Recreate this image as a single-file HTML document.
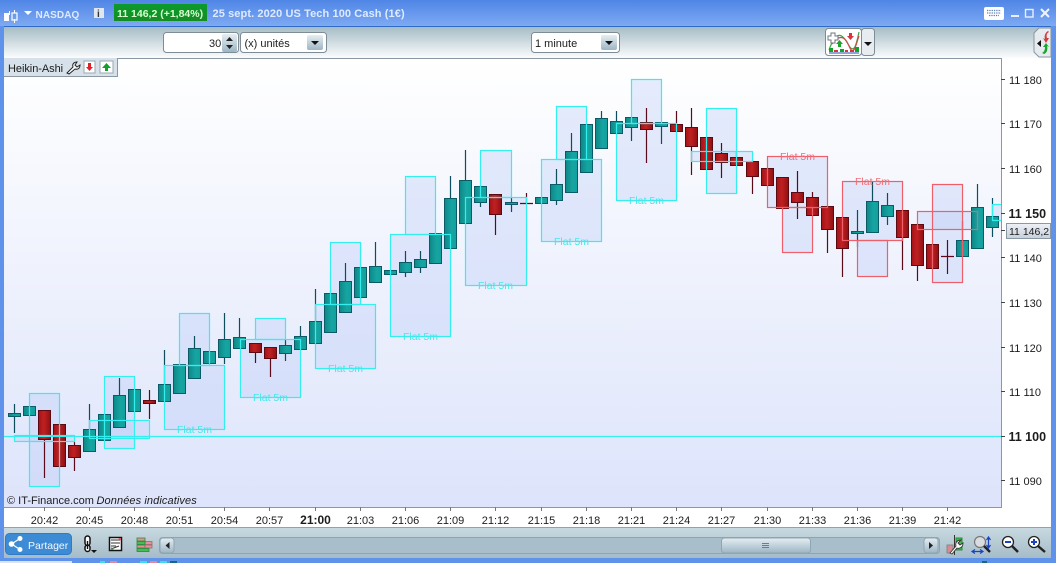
<!DOCTYPE html>
<html><head><meta charset="utf-8"><style>
html,body{margin:0;padding:0;width:1056px;height:563px;overflow:hidden;background:#5f92ea}
svg{display:block;position:absolute;left:0;top:0}
text{font-family:"Liberation Sans",sans-serif;font-size:11px;fill:#1c1c1c}
</style></head><body>
<svg width="1056" height="563" viewBox="0 0 1056 563" xmlns="http://www.w3.org/2000/svg">
<defs>
<linearGradient id="title" x1="0" y1="0" x2="0" y2="1"><stop offset="0" stop-color="#4f85e6"/><stop offset="1" stop-color="#7eaaf2"/></linearGradient>
<linearGradient id="tb" x1="0" y1="0" x2="0" y2="1"><stop offset="0" stop-color="#a3bac3"/><stop offset=".55" stop-color="#d3dfe3"/><stop offset="1" stop-color="#fbfcfd"/></linearGradient>
<linearGradient id="chart" x1="0" y1="0" x2="0" y2="1"><stop offset="0" stop-color="#ffffff"/><stop offset="1" stop-color="#dde4fb"/></linearGradient>
<linearGradient id="bb" x1="0" y1="0" x2="0" y2="1"><stop offset="0" stop-color="#c9dae1"/><stop offset="1" stop-color="#a5bcc8"/></linearGradient>
<linearGradient id="t" x1="0" y1="0" x2="1" y2="0"><stop offset="0" stop-color="#0d8787"/><stop offset=".6" stop-color="#16a5a2"/><stop offset="1" stop-color="#12a09d"/></linearGradient>
<linearGradient id="r" x1="0" y1="0" x2="1" y2="0"><stop offset="0" stop-color="#a31418"/><stop offset=".45" stop-color="#c02022"/><stop offset="1" stop-color="#8f1013"/></linearGradient>
<linearGradient id="btn" x1="0" y1="0" x2="0" y2="1"><stop offset="0" stop-color="#e6eef2"/><stop offset="1" stop-color="#9db6c4"/></linearGradient>
<linearGradient id="grn" x1="0" y1="0" x2="0" y2="1"><stop offset="0" stop-color="#0c9a2c"/><stop offset="1" stop-color="#148d25"/></linearGradient>
<linearGradient id="price" x1="0" y1="0" x2="0" y2="1"><stop offset="0" stop-color="#eef1f7"/><stop offset="1" stop-color="#c6cfdb"/></linearGradient>
</defs>

<!-- window -->
<rect width="1056" height="563" fill="#5f92ea"/>
<rect width="1056" height="26" fill="url(#title)"/>
<rect x="0" y="561" width="72" height="2" fill="#dbe4ec"/>
<rect x="100" y="561" width="5" height="2" fill="#39dfe6"/><rect x="110" y="561" width="7" height="2" fill="#e08a9c"/><rect x="140" y="561" width="7" height="2" fill="#39dfe6"/><rect x="150" y="561" width="7" height="2" fill="#e08a9c"/><rect x="160" y="561" width="7" height="2" fill="#39dfe6"/><rect x="170" y="561" width="7" height="2" fill="#116b78"/><rect x="982" y="561" width="5" height="2" fill="#116b78"/>
<!-- toolbar -->
<rect x="4" y="26" width="1047" height="32" fill="url(#tb)"/>
<rect x="4" y="26" width="1047" height="1" fill="#2f6bc9"/>
<!-- chart bg -->
<rect x="4" y="58" width="1047" height="449" fill="#fff"/>
<rect x="4" y="58" width="997" height="449" fill="url(#chart)"/>
<rect x="1001" y="58" width="50" height="469" fill="#fff"/>
<rect x="4" y="507" width="1047" height="20" fill="#fff"/>
<path d="M4 58.5H1001.5V507.5H4" fill="none" stroke="#8b97a3"/>
<rect x="4" y="527" width="1047" height="31" fill="url(#bb)"/>
<rect x="4" y="527" width="1047" height="1" fill="#8fa3ae"/>

<!-- title bar content -->
<path d="M9.5 11v4M14.5 10v3M14.5 19v4" stroke="#fff" fill="none"/>
<rect x="4" y="13" width="5" height="8" fill="#fff"/>
<rect x="12" y="13" width="5" height="7" fill="none" stroke="#fff" stroke-width="1.2"/>
<path d="M24 11h8l-4 4z" fill="#fff"/>
<text x="35.5" y="18" style="font-weight:bold;font-size:10px;fill:#dfeaff;letter-spacing:.1px">NASDAQ</text>
<rect x="94" y="8" width="10" height="10" fill="#dfe7f3"/>
<text x="97" y="17" style="font-weight:bold;font-size:10px;fill:#333">i</text>
<rect x="114" y="4" width="93" height="17" fill="url(#grn)"/>
<text x="117" y="17" style="font-weight:bold;font-size:10.5px;fill:#d7ffd0">11 146,2 (+1,84%)</text>
<text x="212.5" y="17" style="font-weight:bold;font-size:11px;fill:#dfeaff;letter-spacing:.1px">25 sept. 2020 US Tech 100 Cash (1€)</text>
<!-- keyboard -->
<rect x="984" y="7" width="20" height="13" rx="2" fill="#fff"/>
<path d="M987 10.5h14M987 13h14M989 15.5h10" stroke="#5f7fb5" stroke-width="1.3" stroke-dasharray="1.3 1" fill="none"/>
<rect x="1011" y="15" width="8" height="2" fill="#e8effb"/>
<rect x="1025.5" y="9.5" width="7.5" height="7.5" fill="none" stroke="#e8effb" stroke-width="1.4"/>
<path d="M1041 9l8 8M1049 9l-8 8" stroke="#f0f5fd" stroke-width="2"/>

<!-- toolbar controls -->
<rect x="163.5" y="32.5" width="75" height="20" rx="3" fill="#fff" stroke="#7e8c96"/>
<text x="209" y="47">30</text>
<rect x="222" y="34" width="15" height="18" rx="2" fill="url(#btn)"/>
<path d="M226 41l3.5-4 3.500 4zM226 45l3.500 4 3.500-4z" fill="#222"/>
<rect x="240.500" y="32.500" width="86" height="20" rx="3" fill="#fff" stroke="#7e8c96"/>
<text x="244.500" y="47">(x) unités</text>
<rect x="307" y="35" width="16" height="15" rx="2" fill="url(#btn)"/>
<path d="M311 41h8l-4 4z" fill="#111"/>
<rect x="531.500" y="32.500" width="88" height="20" rx="3" fill="#fff" stroke="#7e8c96"/>
<text x="535" y="47">1 minute</text>
<rect x="601" y="35" width="16" height="15" rx="2" fill="url(#btn)"/>
<path d="M605 41h8l-4 4z" fill="#111"/>
<!-- indicator button -->
<rect x="825.500" y="28.500" width="36" height="27" rx="3" fill="#fff" stroke="#7e8c96"/>
<rect x="861.500" y="28.500" width="13" height="27" rx="3" fill="#e6ecef" stroke="#7e8c96"/>
<path d="M864 42h8l-4 4z" fill="#111"/>
<path d="M829 50C836 30 842 33 848 44S856 46 859 32" fill="none" stroke="#3aa845" stroke-width="1.2"/>
<path d="M832 44C838 36 844 34 849 46S856 44 859 36" fill="none" stroke="#d14a4a" stroke-width="1.2"/>
<path d="M831 33h4v3h3v4h-3v3h-4v-3h-3v-4h3z" fill="#fff" stroke="#6f7a82"/>
<path d="M838 47v-3h-2l3.500-4 3.500 4h-2v3z" fill="#1ba52e"/>
<path d="M849 33h3v3h2l-3.500 4-3.500-4h2z" fill="#d8343f"/>
<path d="M829 48h4v4h-4zM840 49h4v3h-4zM855 47h4v5h-4z" fill="#10a527"/>
<path d="M834 50h4v2h-4zM845 50h3v2h-3zM850 50h4v2h-4z" fill="#d8343f"/>
<path d="M829 53h30" stroke="#2248b0"/>
<!-- side tab -->
<path d="M1051 28h-12l-5 5v19l5 5h12z" fill="#e6ebef" stroke="#8a97a2"/>
<path d="M1041 40l-4 3.500 4 3.500z" fill="#111"/>
<path d="M1048 31c-3 2-4 5-3 8l-2-1 3 5 3-5h-2c-1-3 0-5 2-6z" fill="#d63b3b"/>
<path d="M1044 54c3-1 4-5 3-8l2 1-3-4-3 4h2c0 3-1 5-3 6z" fill="#1aa52c"/>

<!-- box fills -->
<g fill="#bccdf8" fill-opacity=".38">
<rect x="29.500" y="393.500" width="30" height="93"/><rect x="14.500" y="435.500" width="60" height="6"/>
<rect x="104.500" y="376.500" width="30" height="72"/><rect x="89.500" y="420.500" width="60" height="18"/>
<rect x="179.500" y="313.500" width="30" height="52"/><rect x="164.500" y="365.500" width="60" height="64"/>
<rect x="255.500" y="318.500" width="30" height="21"/><rect x="240.500" y="339.500" width="60" height="58"/>
<rect x="330.500" y="242.500" width="30" height="62"/><rect x="315.500" y="304.500" width="60" height="64"/>
<rect x="405.500" y="176.500" width="30" height="58"/><rect x="390.500" y="234.500" width="60" height="102"/>
<rect x="480.500" y="150.500" width="31" height="47"/><rect x="465.500" y="197.500" width="61" height="88"/>
<rect x="556.500" y="106.500" width="30" height="53"/><rect x="541.500" y="159.500" width="60" height="82"/>
<rect x="631.500" y="79.500" width="30" height="44"/><rect x="616.500" y="123.500" width="60" height="77"/>
<rect x="706.500" y="108.500" width="30" height="85"/><rect x="691.500" y="151.500" width="61" height="10"/>
<rect x="767.500" y="156.500" width="60" height="51"/><rect x="782.500" y="207.500" width="30" height="45"/>
<rect x="842.500" y="181.500" width="60" height="59"/><rect x="857.500" y="240.500" width="30" height="36"/>
<rect x="932.500" y="184.500" width="30" height="98"/><rect x="917.500" y="211.500" width="60" height="18"/>
<rect x="992.500" y="204.500" width="9" height="16"/>
</g>

<!-- wicks -->
<path fill="none" stroke="#0e4d5c" stroke-width="1.2" d="M14.500 404V433M89.500 404V430M119.500 378V396M164.500 350V385M194.500 336V349M224.500 313V364M239.500 318V338M285.500 340V361M300.500 326V337M315.500 289V322M345.500 263V282M375.500 242V267M405.500 251V277M420.500 251V273M450.500 176V199M465.500 150V181M480.500 190V207M511.500 198V212M556.500 169V205M571.500 133V152M601.500 111V119M616.500 111V122M631.500 127V141M661.500 126V144M857.500 210V247M872.500 182V202M887.500 193V225M962.500 221V241M977.500 184V208M992.500 198V237"/>
<path fill="none" stroke="#5a0a1a" stroke-width="1.2" d="M44.500 439V478M74.500 442V471M149.500 390V419M255.500 352V363M270.500 358V377M495.500 214V235M526.500 193V204M520 203.500H533M646.500 108V163M676.500 111V125M691.500 108V175M721.500 143V178M736.500 152V158M752.500 176V194M797.500 171V219M812.500 192V198M827.500 229V253M842.500 248V277M902.500 237V270M917.500 265V281M947.500 240V274M941 256.500H954"/>

<!-- teal bodies -->
<g fill="url(#t)" stroke="#0b5a68">
<rect x="8.500" y="413.500" width="12" height="3"/><rect x="23.500" y="406.500" width="12" height="9"/><rect x="83.500" y="429.500" width="12" height="22"/><rect x="98.500" y="414.500" width="12" height="26"/><rect x="113.500" y="395.500" width="12" height="32"/><rect x="128.500" y="389.500" width="12" height="22"/><rect x="158.500" y="384.500" width="12" height="17"/><rect x="173.500" y="364.500" width="12" height="29"/><rect x="188.500" y="348.500" width="12" height="30"/><rect x="203.500" y="351.500" width="12" height="12"/><rect x="218.500" y="339.500" width="12" height="18"/><rect x="233.500" y="337.500" width="12" height="11"/><rect x="279.500" y="345.500" width="12" height="8"/><rect x="294.500" y="336.500" width="12" height="13"/><rect x="309.500" y="321.500" width="12" height="22"/><rect x="324.500" y="293.500" width="12" height="39"/><rect x="339.500" y="281.500" width="12" height="31"/><rect x="354.500" y="267.500" width="12" height="30"/><rect x="369.500" y="266.500" width="12" height="16"/><rect x="384.500" y="270.500" width="12" height="4"/><rect x="399.500" y="262.500" width="12" height="10"/><rect x="414.500" y="259.500" width="12" height="8"/><rect x="429.500" y="233.500" width="12" height="30"/><rect x="444.500" y="198.500" width="12" height="50"/><rect x="459.500" y="180.500" width="12" height="43"/><rect x="474.500" y="186.500" width="12" height="16"/><rect x="505.500" y="202.500" width="12" height="2"/><rect x="535.500" y="197.500" width="12" height="6"/><rect x="550.500" y="184.500" width="12" height="16"/><rect x="565.500" y="151.500" width="12" height="41"/><rect x="580.500" y="124.500" width="12" height="48"/><rect x="595.500" y="118.500" width="12" height="30"/><rect x="610.500" y="121.500" width="12" height="12"/><rect x="625.500" y="117.500" width="12" height="10"/><rect x="655.500" y="122.500" width="12" height="4"/><rect x="851.500" y="231.500" width="12" height="2"/><rect x="866.500" y="201.500" width="12" height="31"/><rect x="881.500" y="205.500" width="12" height="11"/><rect x="956.500" y="240.500" width="12" height="16"/><rect x="971.500" y="207.500" width="12" height="41"/><rect x="986.500" y="216.500" width="12" height="11"/>
</g>
<!-- red bodies -->
<g fill="url(#r)" stroke="#5c0a12">
<rect x="38.500" y="410.500" width="12" height="29"/><rect x="53.500" y="424.500" width="12" height="42"/><rect x="68.500" y="445.500" width="12" height="12"/><rect x="143.500" y="400.500" width="12" height="3"/><rect x="249.500" y="343.500" width="12" height="9"/><rect x="264.500" y="347.500" width="12" height="11"/><rect x="489.500" y="194.500" width="12" height="20"/><rect x="640.500" y="122.500" width="12" height="7"/><rect x="670.500" y="124.500" width="12" height="7"/><rect x="685.500" y="127.500" width="12" height="19"/><rect x="700.500" y="137.500" width="12" height="32"/><rect x="715.500" y="153.500" width="12" height="9"/><rect x="730.500" y="157.500" width="12" height="8"/><rect x="746.500" y="161.500" width="12" height="15"/><rect x="761.500" y="168.500" width="12" height="17"/><rect x="776.500" y="177.500" width="12" height="31"/><rect x="791.500" y="192.500" width="12" height="10"/><rect x="806.500" y="197.500" width="12" height="18"/><rect x="821.500" y="206.500" width="12" height="23"/><rect x="836.500" y="217.500" width="12" height="31"/><rect x="896.500" y="210.500" width="12" height="27"/><rect x="911.500" y="224.500" width="12" height="41"/><rect x="926.500" y="244.500" width="12" height="24"/>
</g>

<!-- box strokes -->
<g fill="none" stroke="#35eeee" stroke-width="1.2">
<rect x="29.500" y="393.500" width="30" height="93"/><rect x="14.500" y="435.500" width="60" height="6"/>
<rect x="104.500" y="376.500" width="30" height="72"/><rect x="89.500" y="420.500" width="60" height="18"/>
<rect x="179.500" y="313.500" width="30" height="52"/><rect x="164.500" y="365.500" width="60" height="64"/>
<rect x="255.500" y="318.500" width="30" height="21"/><rect x="240.500" y="339.500" width="60" height="58"/>
<rect x="330.500" y="242.500" width="30" height="62"/><rect x="315.500" y="304.500" width="60" height="64"/>
<rect x="405.500" y="176.500" width="30" height="58"/><rect x="390.500" y="234.500" width="60" height="102"/>
<rect x="480.500" y="150.500" width="31" height="47"/><rect x="465.500" y="197.500" width="61" height="88"/>
<rect x="556.500" y="106.500" width="30" height="53"/><rect x="541.500" y="159.500" width="60" height="82"/>
<rect x="631.500" y="79.500" width="30" height="44"/><rect x="616.500" y="123.500" width="60" height="77"/>
<rect x="706.500" y="108.500" width="30" height="85"/><rect x="691.500" y="151.500" width="61" height="10"/>
<path d="M1001 204.500H992.500V220.500H1001"/>
<path d="M4 436.500H1001"/>
</g>
<g fill="none" stroke="#ef5f6a" stroke-width="1.2">
<rect x="767.500" y="156.500" width="60" height="51"/><rect x="782.500" y="207.500" width="30" height="45"/>
<rect x="842.500" y="181.500" width="60" height="59"/><rect x="857.500" y="240.500" width="30" height="36"/>
<rect x="932.500" y="184.500" width="30" height="98"/><rect x="917.500" y="211.500" width="60" height="18"/>
</g>

<!-- box labels -->
<g text-anchor="middle">
<text x="194.500" y="433" style="fill:#45e8ea;font-size:10.5px">Flat 5m</text>
<text x="270.500" y="401" style="fill:#45e8ea;font-size:10.5px">Flat 5m</text>
<text x="345.500" y="372" style="fill:#45e8ea;font-size:10.5px">Flat 5m</text>
<text x="420.500" y="340" style="fill:#45e8ea;font-size:10.5px">Flat 5m</text>
<text x="495.500" y="289" style="fill:#45e8ea;font-size:10.5px">Flat 5m</text>
<text x="571.500" y="245" style="fill:#45e8ea;font-size:10.5px">Flat 5m</text>
<text x="646.500" y="204" style="fill:#45e8ea;font-size:10.5px">Flat 5m</text>
<text x="797.500" y="160" style="fill:#ef6f78;font-size:10.5px">Flat 5m</text>
<text x="872.500" y="185" style="fill:#ef6f78;font-size:10.5px">Flat 5m</text>
</g>

<!-- heikin tab -->
<rect x="4" y="58" width="113" height="18" fill="#d6e1ea"/>
<path d="M4 76.500H117.500V58" fill="none" stroke="#8b97a3"/>
<text x="8" y="72" style="font-size:11px;letter-spacing:-.05px">Heikin-Ashi</text>
<path d="M67 73l6-6c-1-3 1-5 4-5l-2 3 2 2 3-2c0 3-2 5-5 4l-6 5z" fill="#fff" stroke="#222"/>
<rect x="84" y="61" width="11" height="12" fill="#fff" stroke="#9ba8b2"/>
<path d="M89.500 71l-3.500-4h7z" fill="#e0202a"/><rect x="88" y="63" width="3" height="4" fill="#e0202a"/>
<rect x="100" y="61" width="13" height="12" fill="#fff" stroke="#9ba8b2"/>
<path d="M106.500 63l-4.500 5h3v3h3v-3h3z" fill="#13a12b"/>

<!-- copyright -->
<text x="7" y="504">© IT-Finance.com</text>
<text x="96.500" y="504" style="font-style:italic;letter-spacing:.1px">Données indicatives</text>

<!-- y axis -->
<path d="M1001 79.500h4M1001 123.500h4M1001 168.500h4M1001 213.500h4M1001 230.500h4M1001 257.500h4M1001 302.500h4M1001 347.500h4M1001 391.500h4M1001 436.500h4M1001 480.500h4" stroke="#444"/>
<text x="1009" y="84">11 180</text>
<text x="1009" y="128">11 170</text>
<text x="1009" y="173">11 160</text>
<text x="1008.500" y="218" style="font-weight:bold;font-size:12.500px">11 150</text>
<text x="1009" y="262">11 140</text>
<text x="1009" y="307">11 130</text>
<text x="1009" y="352">11 120</text>
<text x="1009" y="396">11 110</text>
<text x="1008.500" y="441" style="font-weight:bold;font-size:12.500px">11 100</text>
<text x="1009" y="485">11 090</text>
<rect x="1006.500" y="223.500" width="44" height="15" fill="url(#price)" stroke="#8a98a6"/>
<text x="1009" y="235" style="font-size:10.5px">11 146,2</text>

<!-- x axis -->
<path d="M44.500 507v4M89.500 507v4M134.500 507v4M179.500 507v4M224.500 507v4M269.500 507v4M315.500 507v4M360.500 507v4M405.500 507v4M450.500 507v4M495.500 507v4M541.500 507v4M586.500 507v4M631.500 507v4M676.500 507v4M721.500 507v4M767.500 507v4M812.500 507v4M857.500 507v4M902.500 507v4M947.500 507v4" stroke="#777"/>
<g text-anchor="middle">
<text x="44.500" y="524">20:42</text><text x="89.500" y="524">20:45</text><text x="134.500" y="524">20:48</text><text x="179.500" y="524">20:51</text><text x="224.500" y="524">20:54</text><text x="269.500" y="524">20:57</text>
<text x="315.500" y="524" style="font-weight:bold;font-size:12px">21:00</text>
<text x="360.500" y="524">21:03</text><text x="405.500" y="524">21:06</text><text x="450.500" y="524">21:09</text><text x="495.500" y="524">21:12</text><text x="541.500" y="524">21:15</text><text x="586.500" y="524">21:18</text><text x="631.500" y="524">21:21</text><text x="676.500" y="524">21:24</text><text x="721.500" y="524">21:27</text><text x="767.500" y="524">21:30</text><text x="812.500" y="524">21:33</text><text x="857.500" y="524">21:36</text><text x="902.500" y="524">21:39</text><text x="947.500" y="524">21:42</text>
</g>

<!-- bottom bar -->
<rect x="5.500" y="533.500" width="66" height="21" rx="4" fill="#3c8bd4" stroke="#2f7cc4"/>
<g fill="#fff"><circle cx="11.500" cy="544" r="2.800"/><circle cx="20" cy="538.500" r="2.500"/><circle cx="20" cy="549.500" r="2.500"/></g>
<path d="M20 538.500L11.500 544L20 549.500" fill="none" stroke="#fff" stroke-width="1.200"/>
<text x="28" y="549" style="font-size:10.5px;fill:#f2f8ff">Partager</text>
<!-- link icon -->
<path d="M85 538.500a2.500 2.500 0 0 1 5 0v4.500a2.500 2.500 0 0 1-5 0zM85 547.500a2.500 2.500 0 0 1 5 0v1.500a2.500 2.500 0 0 1-5 0z" fill="#fff" stroke="#111" stroke-width="1.500"/>
<path d="M87.500 541v8" stroke="#111" stroke-width="1.400"/>
<path d="M91 550h6l-3 3z" fill="#111"/>
<!-- list icon -->
<rect x="109.500" y="537.500" width="12" height="13" fill="#fff" stroke="#111" stroke-width="1.500"/>
<path d="M111 540h9M111 543h9M111 546h5M111 549l8-3" stroke="#333" fill="none"/>
<path d="M118 538l3 3v-3z" fill="#d65a5a"/><path d="M111 547l3 3h-3z" fill="#2ca83c"/>
<!-- bricks -->
<rect x="137" y="538" width="8" height="3" fill="#e78f96" stroke="#2a8a3a" stroke-width=".8"/>
<rect x="145" y="541.500" width="7" height="3" fill="#e78f96" stroke="#9a6a70" stroke-width=".8"/>
<rect x="137" y="541.500" width="8" height="3" fill="#49bb55" stroke="#2a8a3a" stroke-width=".8"/>
<rect x="137" y="545" width="8" height="3" fill="#e78f96" stroke="#2a8a3a" stroke-width=".8"/>
<rect x="145" y="545" width="7" height="3" fill="#e78f96" stroke="#9a6a70" stroke-width=".8"/>
<rect x="137" y="548.500" width="12" height="3" fill="#49bb55" stroke="#2a8a3a" stroke-width=".8"/>
<!-- scrollbar -->
<rect x="159.500" y="537.500" width="780" height="16" rx="3" fill="#a8bfcb" stroke="#8ea5b1"/>
<rect x="160" y="538" width="14" height="15" rx="3" fill="url(#btn)" stroke="#8fa6b2"/>
<path d="M169.500 542v7l-4-3.500z" fill="#222"/>
<rect x="721.500" y="538" width="89" height="15" rx="3" fill="url(#btn)" stroke="#8fa6b2"/>
<path d="M762 543.500h7M762 545.500h7M762 547.500h7" stroke="#66808e"/>
<rect x="924" y="538" width="14" height="15" rx="3" fill="url(#btn)" stroke="#8fa6b2"/>
<path d="M929 542v7l4-3.500z" fill="#222"/>
<!-- wrench/candle -->
<path d="M954.500 535v20" stroke="#333"/>
<rect x="956" y="538" width="6" height="12" fill="#3fc04e" stroke="#2a8a3a"/>
<rect x="947" y="545" width="6" height="8" fill="#d88a92" stroke="#888"/>
<path d="M950 553l6-7c-1-3 1-6 5-6l-3 3 2 2 3-2c0 4-3 6-6 5l-5 6z" fill="#fff" stroke="#333" stroke-width=".9"/>
<!-- zoom fit -->
<circle cx="980" cy="542" r="5.500" fill="#d9dde0" stroke="#777" stroke-width="1.200"/>
<path d="M984 546l6 6" stroke="#222" stroke-width="2.400"/>
<path d="M988.500 538v9M986.500 540l2-3 2 3M986.500 545l2 3 2-3M973 551.500h9M975 549.500l-3 2 3 2M980 549.500l3 2-3 2" fill="none" stroke="#1a43c4" stroke-width="1.200"/>
<!-- zoom out -->
<circle cx="1008" cy="542" r="5.500" fill="#fff" stroke="#222" stroke-width="1.300"/>
<path d="M1005 542h6" stroke="#1a43c4" stroke-width="2"/>
<path d="M1012 546l6 6" stroke="#222" stroke-width="2.400"/>
<!-- zoom in -->
<circle cx="1034" cy="542" r="5.500" fill="#fff" stroke="#222" stroke-width="1.300"/>
<path d="M1031 542h6M1034 539v6" stroke="#1a43c4" stroke-width="2"/>
<path d="M1038 546l7 6" stroke="#222" stroke-width="2.400"/>
</svg>
</body></html>
